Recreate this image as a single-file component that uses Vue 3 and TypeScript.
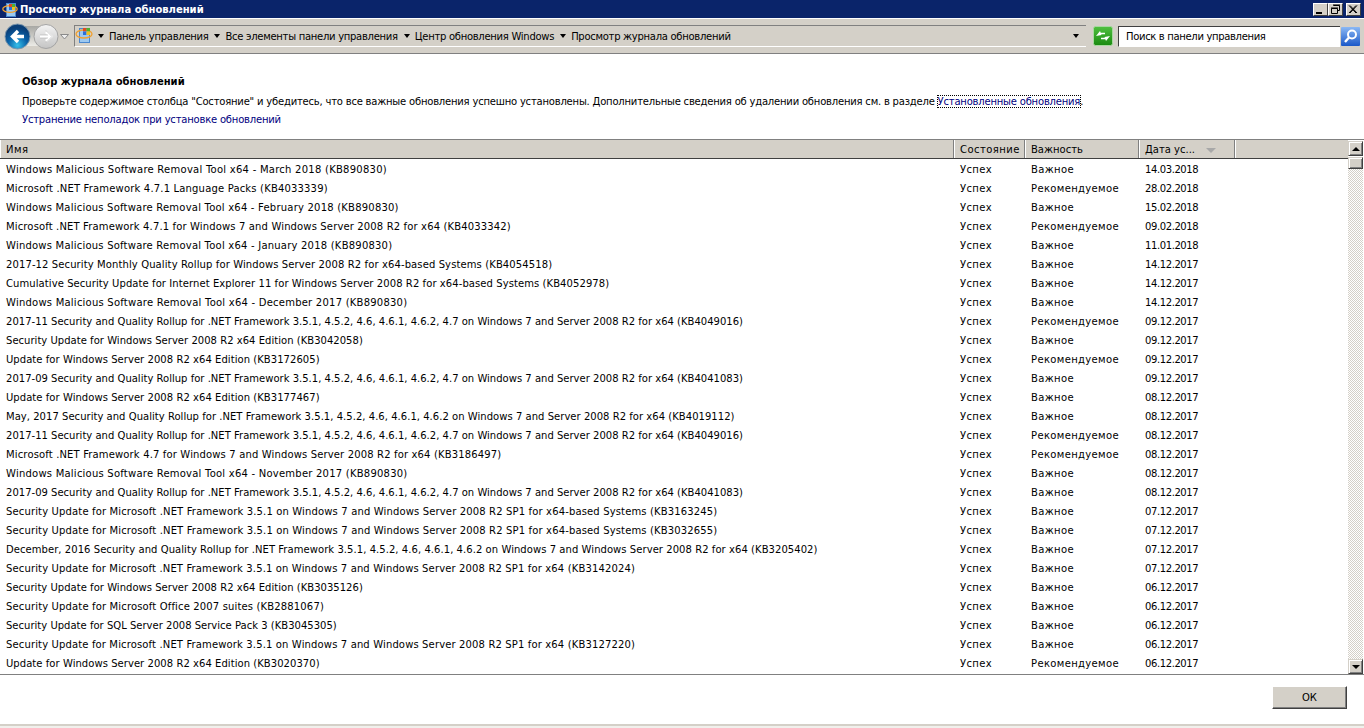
<script setup lang="ts">
interface Row { name: string; state: string; imp: string; date: string; track: string }
const I = 'Важное'
const R = 'Рекомендуемое'
const raw: [string, string, string, number][] = [
  ['Windows Malicious Software Removal Tool x64 - March 2018 (KB890830)', I, '14.03.2018', 17],
  ['Microsoft .NET Framework 4.7.1 Language Packs (KB4033339)', R, '28.02.2018', 10],
  ['Windows Malicious Software Removal Tool x64 - February 2018 (KB890830)', I, '15.02.2018', 15],
  ['Microsoft .NET Framework 4.7.1 for Windows 7 and Windows Server 2008 R2 for x64 (KB4033342)', R, '09.02.2018', 13],
  ['Windows Malicious Software Removal Tool x64 - January 2018 (KB890830)', I, '11.01.2018', 15],
  ['2017-12 Security Monthly Quality Rollup for Windows Server 2008 R2 for x64-based Systems (KB4054518)', I, '14.12.2017', 11],
  ['Cumulative Security Update for Internet Explorer 11 for Windows Server 2008 R2 for x64-based Systems (KB4052978)', I, '14.12.2017', 9],
  ['Windows Malicious Software Removal Tool x64 - December 2017 (KB890830)', I, '14.12.2017', 16],
  ['2017-11 Security and Quality Rollup for .NET Framework 3.5.1, 4.5.2, 4.6, 4.6.1, 4.6.2, 4.7 on Windows 7 and Server 2008 R2 for x64 (KB4049016)', R, '09.12.2017', 2],
  ['Security Update for Windows Server 2008 R2 x64 Edition (KB3042058)', I, '09.12.2017', 2],
  ['Update for Windows Server 2008 R2 x64 Edition (KB3172605)', R, '09.12.2017', 3],
  ['2017-09 Security and Quality Rollup for .NET Framework 3.5.1, 4.5.2, 4.6, 4.6.1, 4.6.2, 4.7 on Windows 7 and Server 2008 R2 for x64 (KB4041083)', I, '09.12.2017', 2],
  ['Update for Windows Server 2008 R2 x64 Edition (KB3177467)', I, '08.12.2017', 3],
  ['May, 2017 Security and Quality Rollup for .NET Framework 3.5.1, 4.5.2, 4.6, 4.6.1, 4.6.2 on Windows 7 and Server 2008 R2 for x64 (KB4019112)', I, '08.12.2017', 5],
  ['2017-11 Security and Quality Rollup for .NET Framework 3.5.1, 4.5.2, 4.6, 4.6.1, 4.6.2, 4.7 on Windows 7 and Server 2008 R2 for x64 (KB4049016)', R, '08.12.2017', 2],
  ['Microsoft .NET Framework 4.7 for Windows 7 and Windows Server 2008 R2 for x64 (KB3186497)', R, '08.12.2017', 13],
  ['Windows Malicious Software Removal Tool x64 - November 2017 (KB890830)', I, '08.12.2017', 16],
  ['2017-09 Security and Quality Rollup for .NET Framework 3.5.1, 4.5.2, 4.6, 4.6.1, 4.6.2, 4.7 on Windows 7 and Server 2008 R2 for x64 (KB4041083)', I, '08.12.2017', 2],
  ['Security Update for Microsoft .NET Framework 3.5.1 on Windows 7 and Windows Server 2008 R2 SP1 for x64-based Systems (KB3163245)', I, '07.12.2017', 19],
  ['Security Update for Microsoft .NET Framework 3.5.1 on Windows 7 and Windows Server 2008 R2 SP1 for x64-based Systems (KB3032655)', I, '07.12.2017', 19],
  ['December, 2016 Security and Quality Rollup for .NET Framework 3.5.1, 4.5.2, 4.6, 4.6.1, 4.6.2 on Windows 7 and Windows Server 2008 R2 for x64 (KB3205402)', I, '07.12.2017', 9],
  ['Security Update for Microsoft .NET Framework 3.5.1 on Windows 7 and Windows Server 2008 R2 SP1 for x64 (KB3142024)', I, '07.12.2017', 16],
  ['Security Update for Windows Server 2008 R2 x64 Edition (KB3035126)', I, '06.12.2017', 2],
  ['Security Update for Microsoft Office 2007 suites (KB2881067)', I, '06.12.2017', 9],
  ['Security Update for SQL Server 2008 Service Pack 3 (KB3045305)', I, '06.12.2017', 1],
  ['Security Update for Microsoft .NET Framework 3.5.1 on Windows 7 and Windows Server 2008 R2 SP1 for x64 (KB3127220)', I, '06.12.2017', 16],
  ['Update for Windows Server 2008 R2 x64 Edition (KB3020370)', R, '06.12.2017', 3],
]
const rows: Row[] = raw.map(([name, imp, date, fit]) => ({
  name,
  state: 'Успех',
  imp,
  date,
  track: (fit / name.length).toFixed(3) + 'px',
}))
const crumbs = ['Панель управления', 'Все элементы панели управления', 'Центр обновления Windows', 'Просмотр журнала обновлений']
</script>

<template>
  <div class="win">
    <header class="titlebar">
      <svg class="ticon" width="17" height="17" viewBox="0 0 17 17">
        <rect x="4.500" y="2.500" width="9" height="13" fill="#9cc8f0" stroke="#4a88d0" />
        <ellipse cx="8" cy="8" rx="7.200" ry="3.400" fill="none" stroke="#f0a030" stroke-width="1.300" />
        <rect x="7" y="3" width="3" height="3" fill="#e04a20" /><rect x="10" y="3" width="3" height="3" fill="#50b030" />
        <rect x="7" y="6" width="3" height="3" fill="#2a70d8" /><rect x="10" y="6" width="3" height="3" fill="#f0c020" />
      </svg>
      <span class="ttext">Просмотр журнала обновлений</span>
      <div class="caps">
        <button class="cap"><svg width="13" height="11" viewBox="0 0 13 11"><rect x="2" y="8" width="6" height="2" fill="#000" /></svg></button>
        <button class="cap"><svg width="13" height="11" viewBox="0 0 13 11"><path d="M4.500 1.500h6v5h-2M4 1h7M2.500 4.500h6v5h-6zM2 4h7" fill="none" stroke="#000" /></svg></button>
        <button class="cap close"><svg width="13" height="11" viewBox="0 0 13 11"><path d="M2 1.500l7 7.500M3 1.500l7 7.500M9 1.500l-7 7.500M10 1.500l-7 7.500" stroke="#000" fill="none" /></svg></button>
      </div>
    </header>

    <nav class="toolbar">
      <div class="navs">
        <svg width="70" height="30" viewBox="0 0 70 30">
          <defs>
            <radialGradient id="bk" cx="50%" cy="85%" r="70%"><stop offset="0" stop-color="#36c0ea" /><stop offset="0.55" stop-color="#0a62a8" /><stop offset="1" stop-color="#0a3f78" /></radialGradient>
            <linearGradient id="fw" x1="0" y1="0" x2="0" y2="1"><stop offset="0" stop-color="#f4f4f4" /><stop offset="1" stop-color="#c4c4c4" /></linearGradient>
            <linearGradient id="bd" x1="0" y1="0" x2="0" y2="1"><stop offset="0" stop-color="#a8a8a4" /><stop offset="1" stop-color="#ecebe6" /></linearGradient>
          </defs>
          <rect x="12" y="5" width="38" height="20" rx="9" fill="url(#bd)" />
          <circle cx="43" cy="15.500" r="12" fill="url(#fw)" stroke="#a4a4a4" />
          <path d="M37 15.500h10M43 11l5 4.500-5 4.500" fill="none" stroke="#fff" stroke-width="3" />
          <path d="M37 14h8M43 9.500l6 6-6 6M37 17h8" fill="none" stroke="#b0b0b0" stroke-width="0.600" />
          <circle cx="14.500" cy="15.500" r="12.500" fill="url(#bk)" stroke="#7f98ac" />
          <path d="M21 15.500H9.500M15 10L9.500 15.500l5.500 5.500" fill="none" stroke="#fff" stroke-width="3.400" />
          <path d="M57.500 13.500h8l-4 4.500z" fill="#eee" stroke="#8a8a8a" />
        </svg>
      </div>
      <div class="address">
        <svg class="aicon" width="18" height="20" viewBox="0 0 18 20">
          <rect x="4.500" y="3.500" width="10" height="14" fill="#9cc8f0" stroke="#4a88d0" />
          <ellipse cx="9" cy="9" rx="8" ry="4" fill="none" stroke="#f0a030" stroke-width="1.300" />
          <rect x="8" y="3" width="3.500" height="3.500" fill="#e04a20" /><rect x="11.500" y="3" width="3.500" height="3.500" fill="#50b030" />
          <rect x="8" y="6.500" width="3.500" height="3.500" fill="#2a70d8" /><rect x="11.500" y="6.500" width="3.500" height="3.500" fill="#f0c020" />
        </svg>
        <template v-for="c in crumbs" :key="c">
          <i class="arr"></i><span class="crumb">{{ c }}</span>
        </template>
        <i class="arr end"></i>
      </div>
      <div class="refresh">
        <svg width="20" height="20" viewBox="0 0 20 20">
          <defs><linearGradient id="gr" x1="0" y1="0" x2="0" y2="1"><stop offset="0" stop-color="#50c040" /><stop offset="1" stop-color="#1a8a10" /></linearGradient></defs>
          <rect x="0.500" y="0.500" width="19" height="19" rx="2" fill="url(#gr)" stroke="#a8d8a0" />
          <path d="M3 10l4-5 1.500 4zM17 10l-4 5-1.500-4z" fill="#fff" />
          <path d="M7 7.500l5 0M8 12.500l5 0" stroke="#fff" stroke-width="1.600" />
        </svg>
      </div>
      <div class="search"><span>Поиск в панели управления</span></div>
      <div class="sbtn">
        <svg width="19" height="19" viewBox="0 0 19 19">
          <defs><linearGradient id="sg" x1="0" y1="0" x2="0" y2="1"><stop offset="0" stop-color="#8ab8f4" /><stop offset="1" stop-color="#1a58c8" /></linearGradient></defs>
          <rect width="19" height="19" rx="1" fill="url(#sg)" />
          <circle cx="11" cy="7.500" r="4" fill="none" stroke="#fff" stroke-width="2" />
          <path d="M8 10.500L4 15" stroke="#fff" stroke-width="2.400" />
        </svg>
      </div>
    </nav>

    <section class="intro">
      <h1>Обзор журнала обновлений</h1>
      <p>Проверьте содержимое столбца "Состояние" и убедитесь, что все важные обновления успешно установлены. Дополнительные сведения об удалении обновления см. в разделе <a class="focus">Установленные обновления</a>.</p>
      <p class="troub"><a>Устранение неполадок при установке обновлений</a></p>
    </section>

    <section class="list">
      <div class="table">
        <div class="thead">
          <div class="th c1 wide">Имя</div>
          <div class="th c2 wide">Состояние</div>
          <div class="th c3">Важность</div>
          <div class="th c4">Дата ус...<i class="sort"></i></div>
          <div class="th c5"></div>
        </div>
        <div v-for="(r, i) in rows" :key="i" class="tr">
          <div class="td c1" :style="{ letterSpacing: r.track }">{{ r.name }}</div>
          <div class="td c2 ru">{{ r.state }}</div>
          <div class="td c3 ru">{{ r.imp }}</div>
          <div class="td c4 num">{{ r.date }}</div>
        </div>
      </div>
      <div class="scroll">
        <div class="sb up"><i></i></div>
        <div class="sb thumb"></div>
        <div class="track"></div>
        <div class="sb down"><i></i></div>
      </div>
    </section>

    <footer class="foot">
      <button class="ok">ОК</button>
    </footer>
    <div class="status"></div>
  </div>
</template>

<style>
html, body { margin: 0; background: #fff; overflow: hidden; }
</style>

<style scoped>
.win { width: 1364px; height: 728px; display: flex; flex-direction: column; font: 10px "DejaVu Sans", Verdana, sans-serif; color: #000; background: #fff; overflow: hidden; }
.titlebar { height: 18px; background: #0a246a; display: flex; align-items: center; flex: none; }
.ticon { margin-left: 2px; }
.ttext { margin-left: 1px; color: #fff; font-weight: 700; }
.caps { margin-left: auto; display: flex; margin-right: 3px; }
.cap { width: 15px; height: 13px; padding: 0; background: #d4d0c8; border: 1px solid; border-color: #fff #404040 #404040 #fff; display: flex; align-items: center; justify-content: center; }
.cap.close { margin-left: 3px; }
.toolbar { height: 34px; background: #d4d0c8; border-top: 1px solid #fff; border-bottom: 1px solid #808080; display: flex; align-items: center; flex: none; box-sizing: content-box; }
.navs { width: 71px; height: 30px; margin-left: 3px; flex: none; }
.address { width: 1012px; height: 22px; border-top: 1px solid #808080; border-left: 1px solid #808080; border-bottom: 1px solid #fff; display: flex; align-items: center; box-sizing: border-box; position: relative; flex: none; }
.aicon { margin: 0 -1px 2px 0; }
.arr { width: 0; height: 0; border: 3.500px solid transparent; border-top: 4px solid #000; border-bottom: 0; margin: 0 5px 0 6px; flex: none; }
.crumb { white-space: nowrap; letter-spacing: -0.28px; }
.arr.end { position: absolute; left: 998px; top: 8px; margin: 0; }
.refresh { margin-left: 6px; flex: none; width: 22px; height: 24px; display: flex; align-items: center; justify-content: center; }
.search { margin-left: 4px; width: 222px; height: 21px; flex: none; background: #fff; border-top: 1px solid #404040; border-left: 1px solid #404040; border-bottom: 1px solid #fff; display: flex; align-items: center; padding-left: 7px; box-sizing: border-box; letter-spacing: -0.33px; }
.sbtn { width: 21px; height: 21px; flex: none; display: flex; align-items: center; justify-content: center; }
.intro { height: 85px; flex: none; padding: 20px 0 0 22px; box-sizing: border-box; }
.intro h1 { margin: 0; font-size: 10px; font-weight: 700; line-height: 15px; }
.intro p { margin: 6px 0 0; line-height: 13px; white-space: nowrap; letter-spacing: -0.2px; }
.intro .troub { margin-top: 5px; }
.intro a { color: #000080; }
.focus { outline: 1px dotted #000; }
.list { height: 536px; flex: none; display: flex; border-top: 1px solid #808080; border-bottom: 1px solid #808080; box-sizing: border-box; position: relative; }
.table { flex: 1; min-width: 0; overflow: hidden; }
.thead { height: 18px; display: flex; background: #d4d0c8; border-bottom: 1px solid #404040; box-sizing: content-box; }
.th { border-right: 1px solid #808080; box-shadow: 1px 0 0 #fff inset; line-height: 20px; box-sizing: border-box; padding-left: 6px; position: relative; white-space: nowrap; }
.wide { letter-spacing: 0.45px; }
.c1 { width: 954px; flex: none; }
.c2 { width: 71px; flex: none; }
.c3 { width: 114px; flex: none; }
.c4 { width: 96px; flex: none; }
.c5 { flex: 1; border-right: 0; }
.sort { position: absolute; left: 67px; top: 8px; width: 0; height: 0; border: 5px solid transparent; border-top: 5px solid #a8a8a8; border-bottom: 0; }
.tr { height: 19px; display: flex; line-height: 21px; white-space: nowrap; }
.td { box-sizing: border-box; padding-left: 6px; overflow: hidden; }
.ru { letter-spacing: 0.35px; }
.num { letter-spacing: -0.4px; }
.scroll { width: 16px; flex: none; display: flex; flex-direction: column; padding: 1px 1px 0 0; box-sizing: border-box; }
.sb { height: 15px; flex: none; background: #d4d0c8; border: 1px solid; border-color: #d4d0c8 #404040 #404040 #d4d0c8; box-shadow: inset 1px 1px 0 #fff, inset -1px -1px 0 #808080; box-sizing: border-box; display: flex; align-items: center; justify-content: center; }
.thumb { height: 12px; margin-top: 1px; }
.sb i { width: 0; height: 0; border: 4px solid transparent; }
.up i { border-bottom: 4px solid #000; border-top: 0; }
.down i { border-top: 4px solid #000; border-bottom: 0; }
.track { flex: 1; background-color: #fff; background-image: conic-gradient(#d4d0c8 25%, #fff 0 50%, #d4d0c8 0 75%, #fff 0); background-size: 2px 2px; }
.foot { height: 49px; flex: none; display: flex; justify-content: flex-end; align-items: flex-start; padding: 11px 17px 0 0; box-sizing: border-box; }
.ok { width: 75px; height: 23px; padding: 0; background: #d4d0c8; border: 1px solid; border-color: #fff #404040 #404040 #fff; box-shadow: inset -1px -1px 0 #808080; font: 10px "DejaVu Sans", Verdana, sans-serif; color: #000; }
.status { flex: 1; background: #f1f0ec; border-top: 2px solid #d4d0c8; }
</style>
